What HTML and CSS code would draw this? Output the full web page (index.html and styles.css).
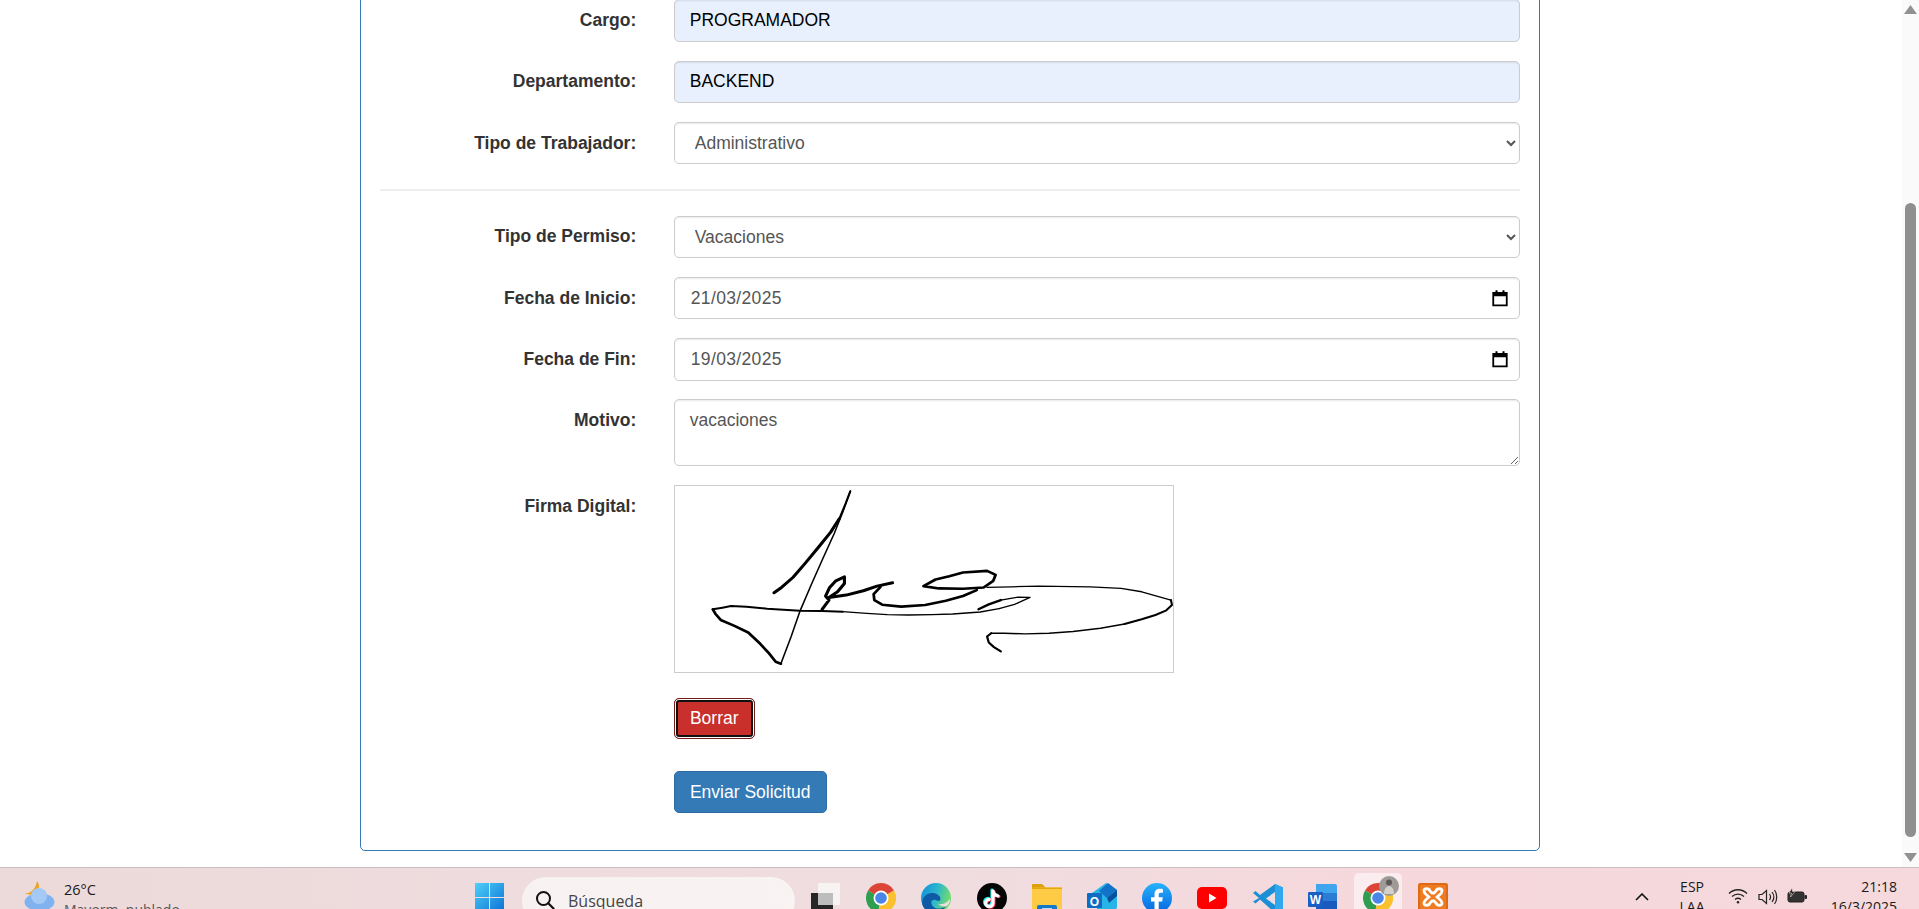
FILE: index.html
```html
<!DOCTYPE html>
<html lang="es">
<head>
<meta charset="utf-8">
<title>Solicitud de Permiso</title>
<link rel="stylesheet" href="styles.css">
</head>
<body>
<div class="window">
  <main class="page">
    <div class="panel">
      <form class="form">
        <div class="row"><label class="lbl">Cargo:</label><input class="control filled" type="text" value="PROGRAMADOR" readonly></div>
        <div class="row"><label class="lbl">Departamento:</label><input class="control filled" type="text" value="BACKEND" readonly></div>
        <div class="row"><label class="lbl">Tipo de Trabajador:</label><select class="control pick"><option>Administrativo</option></select></div>
        <hr class="rule">
        <div class="row"><label class="lbl">Tipo de Permiso:</label><select class="control pick"><option>Vacaciones</option></select></div>
        <div class="row"><label class="lbl">Fecha de Inicio:</label>
          <div class="control date"><span class="date-text">21/03/2025</span>
            <svg class="cal" viewBox="0 0 16 16"><path d="M2 3.5h12v11H2z" fill="none" stroke="#000" stroke-width="1.6"/><path d="M2 3h12v3.5H2zM4 1.2h1.8V4H4zM10.2 1.2H12V4h-1.800z" fill="#000"/></svg>
          </div></div>
        <div class="row"><label class="lbl">Fecha de Fin:</label>
          <div class="control date"><span class="date-text">19/03/2025</span>
            <svg class="cal" viewBox="0 0 16 16"><path d="M2 3.500h12v11H2z" fill="none" stroke="#000" stroke-width="1.6"/><path d="M2 3h12v3.500H2zM4 1.200h1.800V4H4zM10.200 1.200H12V4h-1.800z" fill="#000"/></svg>
          </div></div>
        <div class="row"><label class="lbl">Motivo:</label><textarea class="control area" readonly>vacaciones</textarea></div>
        <div class="row sig-row"><label class="lbl">Firma Digital:</label>
          <div class="field-col">
            <div class="sigbox">
              <svg class="sig" viewBox="42 46 1449 561" preserveAspectRatio="none" fill="none" stroke="#000" stroke-linecap="round" stroke-linejoin="round">
                <path stroke-width="9" d="M330 368L352 352 385 322 420 280 460 230 495 185 520 145"/>
                <path stroke-width="6" d="M520 145L538 100 552 62"/>
                <path stroke-width="4.500" d="M552 62L530 125 505 190 470 270 440 340 405 425 380 500 350 582"/>
                <path stroke-width="8" d="M350 582L335 576 315 550 290 522 255 488 215 468 175 450 160 432 152 418"/>
                <path stroke-width="6" d="M152 418L180 413 205 408 250 410 310 416 405 422 470 423 530 425"/>
                <path stroke-width="4" d="M530 425L600 430 660 434 720 435 790 434 850 432 930 426 985 416"/>
                <path stroke-width="4" d="M985 416L1030 403 1075 382 1040 381 990 390"/>
                <path stroke-width="7" d="M990 390L955 403 925 418"/>
                <path stroke-width="9" d="M470 418L490 390 480 378 492 352 510 332 535 320 535 340 515 365 490 382 540 375 590 362 630 348 675 338"/>
                <path stroke-width="8" d="M640 350L620 372 622 390 645 404 700 410 770 405 830 392 880 378 920 360"/>
                <path stroke-width="8" d="M765 348L800 328 840 318 880 307 950 302 975 314 968 332 940 352 880 356 810 355 765 348"/>
                <path stroke-width="4" d="M950 352L1020 350 1100 348 1250 350 1340 355 1400 365 1485 390"/>
                <path stroke-width="6" d="M1485 390L1488 405 1470 422 1440 435 1400 448 1350 462"/>
                <path stroke-width="4.500" d="M1350 462L1280 475 1200 485 1130 490 1060 492 1000 490 962 490"/>
                <path stroke-width="6.500" d="M962 490L950 500 955 518 970 532 990 545"/>
              </svg>
            </div>
            <button class="btn danger" type="button">Borrar</button>
            <button class="btn primary" type="button">Enviar Solicitud</button>
          </div></div>
      </form>
    </div>
  </main>
  <aside class="scrollbar">
    <svg class="arrow up" viewBox="0 0 13 9"><path d="M6.500 0L13 9H0z" fill="#919191"/></svg>
    <div class="thumb"></div>
    <svg class="arrow down" viewBox="0 0 13 9"><path d="M0 0h13L6.500 9z" fill="#919191"/></svg>
  </aside>
</div>
<footer class="taskbar">
  <div class="weather">
    <svg class="wx" viewBox="0 0 31 30">
      <path d="M13 0c3 4 3 10-3 13-2 1-6 1-9-1 5 1 11-4 12-12z" fill="#f2a31b"/>
      <ellipse cx="15.500" cy="21" rx="15" ry="9" fill="#7fb2ee"/>
      <circle cx="15" cy="15" r="8" fill="#a4c9f5"/>
    </svg>
    <div class="wx-text"><div class="temp">26°C</div><div class="cond">Mayorm. nublado</div></div>
  </div>
  <svg class="win" viewBox="0 0 29 29">
    <defs><linearGradient id="wg" x1="0" y1="0" x2="1" y2="1"><stop offset="0" stop-color="#4fd0f7"/><stop offset="1" stop-color="#0a70d6"/></linearGradient></defs>
    <path d="M0 0h14v14H0zM15 0h14v14H15zM0 15h14v14H0zM15 15h14v14H15z" fill="url(#wg)"/>
  </svg>
  <div class="search">
    <svg class="lens" viewBox="0 0 20 20"><circle cx="8.500" cy="8.500" r="6.500" fill="none" stroke="#111" stroke-width="2"/><path d="M13.300 13.300L18.500 18.500" stroke="#111" stroke-width="2.200" stroke-linecap="round"/></svg>
    <span class="search-text">Búsqueda</span>
  </div>
  <div class="apps">
    <svg class="app" viewBox="0 0 30 30"><rect x="0" y="10" width="22" height="22" fill="#262626"/><rect x="7" y="0" width="22" height="22" rx="1" fill="#f7f3f3"/><rect x="7" y="10" width="15" height="12" fill="#bdbdbd"/></svg>
    <svg class="app" viewBox="0 0 30 30"><path d="M15 15L2 7.500A15 15 0 0 1 28 7.500Z" fill="#db4437"/><path d="M15 15L2 7.500A15 15 0 0 0 12 29.700Z" fill="#2f9e4f"/><path d="M15 15L28 7.500A15 15 0 0 1 12 29.700Z" fill="#fbc02d"/><circle cx="15" cy="15" r="7.500" fill="#fff"/><circle cx="15" cy="15" r="5.800" fill="#4a86e8"/></svg>
    <svg class="app" viewBox="0 0 30 30"><defs><linearGradient id="eg" x1="0" y1="0" x2="1" y2=".3"><stop offset="0" stop-color="#0f8ed8"/><stop offset=".55" stop-color="#2cb6cf"/><stop offset="1" stop-color="#6fdb70"/></linearGradient></defs><circle cx="15" cy="15" r="15" fill="url(#eg)"/><path d="M1 20C2 10 12 8 17 12c3 2 3 5 1 6-2 0-3-2-6-1-3 1-2 6 2 8 3 1 7 1 11-2-3 5-8 7-12 7C7 30 2 26 1 20z" fill="#0e5aa7"/><path d="M17 21c3 1 8 0 12-5 0 3-1 5-3 7-3 1-7 0-9-2z" fill="#efdcdf"/></svg>
    <svg class="app" viewBox="0 0 30 30" fill="none" stroke-width="3.200"><circle cx="15" cy="15" r="15" fill="#050505" stroke="none"/><g stroke-linecap="round"><path d="M15 7v12a3.700 3.700 0 1 1-3.700-3.700M15 7c.5 3 2.500 4.500 5 5" stroke="#25f4ee"/><path d="M17 8.500v12a3.700 3.700 0 1 1-3.700-3.700M17 8.500c.5 3 2.500 4.500 5 5" stroke="#fe2c55"/><path d="M16 8v12a3.700 3.700 0 1 1-3.700-3.700M16 8c.5 3 2.500 4.500 5 5" stroke="#fff"/></g></svg>
    <svg class="app" viewBox="0 0 30 30"><path d="M0 2a1 1 0 0 1 1-1h9l4 4H0z" fill="#dd9f0b"/><rect x="0" y="4.500" width="30" height="27" rx="1" fill="#ffcb45"/><path d="M0 4.500h30v1.500H0z" fill="#e6a60f"/><rect x="5" y="22" width="20" height="10" rx="2" fill="#1478c8"/><rect x="10" y="25" width="10" height="1.500" fill="#bcdcf5"/></svg>
    <svg class="app" viewBox="0 0 30 30"><path d="M5 10L19 0l11 7v18l-6 5H10V10z" fill="#29b4e8"/><path d="M12 8l9-8 9 7-10 8z" fill="#1172c8"/><path d="M20 15l10-8v6l-8 7z" fill="#0a4f9c"/><rect x="0" y="10" width="15" height="15" rx="1" fill="#0f6cc4"/><text class="glyph" x="7.500" y="22.500" text-anchor="middle">O</text></svg>
    <svg class="app" viewBox="0 0 30 30"><defs><linearGradient id="fg" x1="0" y1="0" x2="0" y2="1"><stop offset="0" stop-color="#27b3fb"/><stop offset="1" stop-color="#0664e0"/></linearGradient></defs><circle cx="15" cy="15" r="15" fill="url(#fg)"/><path d="M12.500 30V18.500H9v-4.200h3.500v-3c0-3.600 2.200-5.500 5.300-5.500 1.500 0 2.700.1 3.100.2V9.700h-2c-1.800 0-2.200.9-2.200 2.100v2.500h4.100l-.6 4.200h-3.500V30z" fill="#fff"/></svg>
    <svg class="app" viewBox="0 0 30 30"><rect x="0" y="4" width="30" height="22" rx="5" fill="#f00"/><path d="M12 10.500v9l7.500-4.500z" fill="#fff"/></svg>
    <svg class="app" viewBox="0 0 30 30"><path d="M22 1l8 3.500V26L22 30 7 16.500l-4.500 4L0 18.500 6 15 0 10l2.500-2L7 12z" fill="#1c8fd6"/><path d="M22 1l8 3.500V26L22 30zM22 9l-9 6.500 9 6.500z" fill="#2fa8ee"/><path d="M22 9l-9 6.500 9 6.500z" fill="#efdcdf"/></svg>
    <svg class="app" viewBox="0 0 30 30"><path d="M8 1h19a2 2 0 0 1 2 2v7H8z" fill="#41a5ee"/><path d="M8 10h21v8H8z" fill="#2b7cd3"/><path d="M8 18h21v8H8z" fill="#185abd"/><path d="M8 26h21v5H8z" fill="#103f91"/><rect x="0" y="9" width="15" height="15" rx="1" fill="#1a5fc4"/><text class="glyph" x="7.500" y="21" text-anchor="middle">W</text></svg>
    <span class="active">
      <svg class="app" viewBox="0 0 30 30"><path d="M15 15L2 7.500A15 15 0 0 1 28 7.500Z" fill="#db4437"/><path d="M15 15L2 7.500A15 15 0 0 0 12 29.700Z" fill="#2f9e4f"/><path d="M15 15L28 7.500A15 15 0 0 1 12 29.700Z" fill="#fbc02d"/><circle cx="15" cy="15" r="7.500" fill="#fff"/><circle cx="15" cy="15" r="5.800" fill="#4a86e8"/></svg>
      <svg class="avatar" viewBox="0 0 20 20"><circle cx="10" cy="10" r="10" fill="#9d9a97"/><circle cx="10" cy="6.500" r="3" fill="#5d5957"/><path d="M5 18c0-6 3-8 5-8s5 2 5 8z" fill="#d3d0cc"/></svg>
    </span>
    <svg class="app" viewBox="0 0 30 30"><rect x="0" y="0" width="30" height="32" rx="2" fill="#f07a1f"/><rect x="1" y="1" width="28" height="30" rx="1.500" fill="none" stroke="#c85a10" stroke-width="1"/><path d="M6 8c0-3 5-3 6 0l2 2h2l2-2c1-3 6-3 6 0 0 3-3 4-5 6 2 2 5 3 5 6 0 3-5 3-6 0l-2-2h-2l-2 2c-1 3-6 3-6 0 0-3 3-4 5-6-2-2-5-3-5-6z" fill="none" stroke="#fff" stroke-width="2.800"/></svg>
  </div>
  <div class="tray">
    <svg class="caret" viewBox="0 0 14 8"><path d="M1 7l6-6 6 6" fill="none" stroke="#111" stroke-width="1.600"/></svg>
    <div class="lang"><div>ESP</div><div>LAA</div></div>
    <svg class="wifi" viewBox="0 0 20 16" fill="none" stroke="#222" stroke-width="1.300"><path d="M1 5.500c5-5 13-5 18 0M4 8.500c3.500-3.200 8.500-3.200 12 0M7 11.500c1.800-1.500 4.200-1.500 6 0"/><circle cx="10" cy="14.300" r="1.200" fill="#222" stroke="none"/></svg>
    <svg class="vol" viewBox="0 0 20 16" fill="none" stroke="#222" stroke-width="1.200"><path d="M1 5.500h3l4.500-4v13l-4.500-4H1zM11.500 5c1.300 1.800 1.300 4.200 0 6M14 3c2.300 3 2.300 7 0 10M16.500 1c3 4 3 10 0 14"/></svg>
    <svg class="batt" viewBox="0 0 21 16"><rect x="1" y="4" width="16" height="10" rx="2" fill="#333" stroke="#222"/><rect x="17.500" y="7" width="2.500" height="4" rx="1" fill="#222"/><path d="M5 0L2 5h2.500L3.500 9 8 3.500H5.500z" fill="#222" stroke="#f5d9dc" stroke-width=".6"/></svg>
    <div class="clock"><div>21:18</div><div>16/3/2025</div></div>
  </div>
</footer>
</body>
</html>
```

FILE: styles.css
```css
* { box-sizing: border-box; }
html, body { margin: 0; height: 100%; overflow: hidden; background: #fff; }
body {
  width: 1919px; height: 909px;
  display: flex; flex-direction: column;
  font-family: "Liberation Sans", Arial, sans-serif;
  font-size: 17.5px; line-height: 25px; color: #333;
}
.window { height: 867px; display: flex; overflow: hidden; flex: none; }
.page { flex: 1; overflow: hidden; padding-left: 360px; }
.panel {
  width: 1180px; height: 871px; margin-top: -20px;
  border: 1.25px solid #337ab7; border-radius: 5px;
  padding: 18.25px 18.75px 0;
  background: #fff;
}
.row { display: grid; grid-template-columns: 256.5px 1fr; column-gap: 37.5px; margin-bottom: 18.75px; }
.lbl { font-weight: 700; text-align: right; padding-top: 8.75px; }
.control {
  display: block; width: 100%; height: 42.5px;
  padding: 7.5px 15px;
  font: inherit; line-height: 25px; color: #555;
  background: #fff;
  border: 1.25px solid #ccc; border-radius: 5px;
  box-shadow: inset 0 1.25px 1.25px rgba(0,0,0,.075);
  outline: none;
}
.filled { background: #e8f0fe; color: #000; }
.pick { padding-left: 16px; }
.date { display: flex; align-items: center; justify-content: space-between; padding-right: 10px; padding-left: 16px; }
.date-text { letter-spacing: .35px; }
.cal { width: 18px; height: 18px; flex: none; }
.area { height: 66.75px; resize: vertical; }
.rule { height: 1.25px; margin: 25px 0; border: 0; background: #eee; }
.sig-row { margin-bottom: 0; }
.field-col { display: flex; flex-direction: column; align-items: flex-start; }
.sigbox { width: 500px; height: 188px; border: 1.25px solid #ccc; background: #fff; }
.sig { display: block; width: 100%; height: 100%; filter: blur(.3px); }
.btn {
  display: block; font: inherit; line-height: 25px; color: #fff;
  border-radius: 5px; height: 42px; padding: 0 15px;
}
.danger {
  margin-top: 25px; width: 81px; height: 41.5px; padding: 0;
  background: #c9302c; border: 1.25px solid #761c19;
  box-shadow: inset 0 0 0 1px #fff, inset 0 0 0 3px #111;
}
.primary {
  margin-top: 31.5px; width: 153px; height: 42.5px; padding: 0;
  background: #337ab7; border: 1.25px solid #2e6da4;
}
.scrollbar { width: 17px; flex: none; background: #fafafa; display: flex; flex-direction: column; align-items: center; }
.arrow { width: 13px; height: 9px; flex: none; }
.up { margin-top: 5px; }
.thumb { width: 11px; height: 634px; margin-top: 189px; background: #8f8f8f; border-radius: 6px; flex: none; }
.down { margin-top: 16px; }

.taskbar {
  height: 42px; flex: none; display: flex; align-items: flex-start; overflow: hidden;
  padding-left: 24px;
  border-top: 1px solid #c9bfc0;
  background: linear-gradient(90deg, #ecdadb, #efdde0 48%, #f6d8dc 72%, #f5d9dc);
  font-family: "Open Sans", "Noto Sans", sans-serif;
  font-size: 14px; line-height: 20px; color: #1a1a1a;
}
.weather { width: 451px; flex: none; display: flex; gap: 9px; margin-top: 12px; }
.wx { width: 31px; height: 30px; flex: none; margin-top: 1px; }
.temp { font-size: 14.5px; }
.cond { color: #555; font-size: 14px; }
.win { width: 29px; height: 29px; flex: none; margin-top: 15px; }
.search {
  width: 273px; height: 48px; flex: none; margin: 9px 0 0 18px;
  display: flex; align-items: flex-start; padding: 13px 0 0 13px; gap: 13px;
  border-radius: 24px;
  background: linear-gradient(90deg, #f8f1f2, #f9f3f4);
}
.lens { width: 20px; height: 20px; flex: none; }
.search-text { font-size: 16px; line-height: 22px; color: #444; }
.apps { display: flex; gap: 25.2px; margin: 14px 0 0 16px; flex: none; }
.app { width: 30px; height: 32px; flex: none; display: block; }
.glyph { font: 700 12px "Liberation Sans", sans-serif; fill: #fff; }
.active { position: relative; width: 30px; height: 32px; flex: none; display: block; }
.active::before {
  content: ""; position: absolute; left: -8.500px; top: -9px; width: 47.500px; height: 50px;
  border-radius: 5px; background: rgba(255,255,255,.55);
}
.active .app { position: relative; }
.avatar { position: absolute; left: 16px; top: -6px; width: 20px; height: 20px; }
.tray { display: flex; align-items: flex-start; margin-left: 187px; flex: none; }
.caret { width: 14px; height: 8px; flex: none; margin-top: 25px; }
.lang { width: 40px; margin: 9px 0 0 23px; text-align: center; font-size: 14px; line-height: 20px; flex: none; }
.wifi { width: 20px; height: 16px; flex: none; margin: 20px 0 0 16px; }
.vol { width: 20px; height: 16px; flex: none; margin: 21px 0 0 10px; }
.batt { width: 21px; height: 16px; flex: none; margin: 20px 0 0 9px; }
.clock { width: 72px; margin: 9px 0 0 17px; text-align: right; font-size: 14px; line-height: 20px; flex: none; }
```
